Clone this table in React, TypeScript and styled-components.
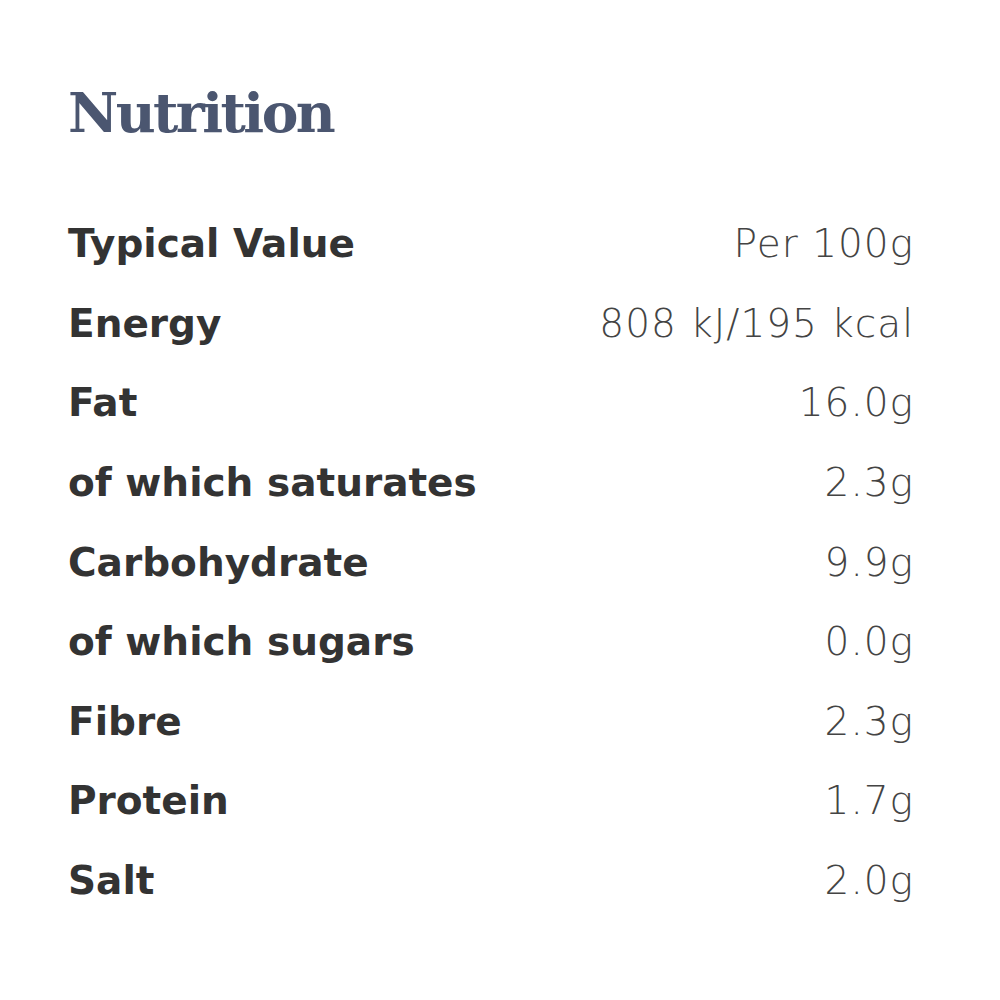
import styled, { createGlobalStyle } from 'styled-components';

const GlobalStyle = createGlobalStyle`
  html, body {
    margin: 0;
    padding: 0;
    background: #ffffff;
  }
`;

const Panel = styled.section`
  width: 846px;
  padding: 78px 0 0 68px;
`;

const Title = styled.h2`
  margin: 0 0 56px;
  font-family: 'DejaVu Serif', serif;
  font-weight: 700;
  font-size: 55px;
  letter-spacing: -2.6px;
  line-height: 70px;
  color: #4b5670;
`;

const Table = styled.div`
  display: flex;
  flex-direction: column;
`;

const Row = styled.div`
  display: flex;
  justify-content: space-between;
  align-items: center;
  height: 79.6px;
`;

const Label = styled.span`
  font-family: 'DejaVu Sans', sans-serif;
  font-weight: 700;
  font-size: 39px;
  color: #333333;
`;

const Value = styled.span`
  font-family: 'DejaVu Sans', sans-serif;
  font-weight: 300;
  font-size: 39px;
  letter-spacing: 1px;
  color: #444444;
`;

const rows: [string, string][] = [
  ['Typical Value', 'Per 100g'],
  ['Energy', '808 kJ/195 kcal'],
  ['Fat', '16.0g'],
  ['of which saturates', '2.3g'],
  ['Carbohydrate', '9.9g'],
  ['of which sugars', '0.0g'],
  ['Fibre', '2.3g'],
  ['Protein', '1.7g'],
  ['Salt', '2.0g'],
];

const App = () => {
  return (
    <>
      <GlobalStyle />
      <Panel>
        <Title>Nutrition</Title>
        <Table>
          {rows.map(([label, value]) => (
            <Row key={label}>
              <Label>{label}</Label>
              <Value>{value}</Value>
            </Row>
          ))}
        </Table>
      </Panel>
    </>
  );
};

export default App;
